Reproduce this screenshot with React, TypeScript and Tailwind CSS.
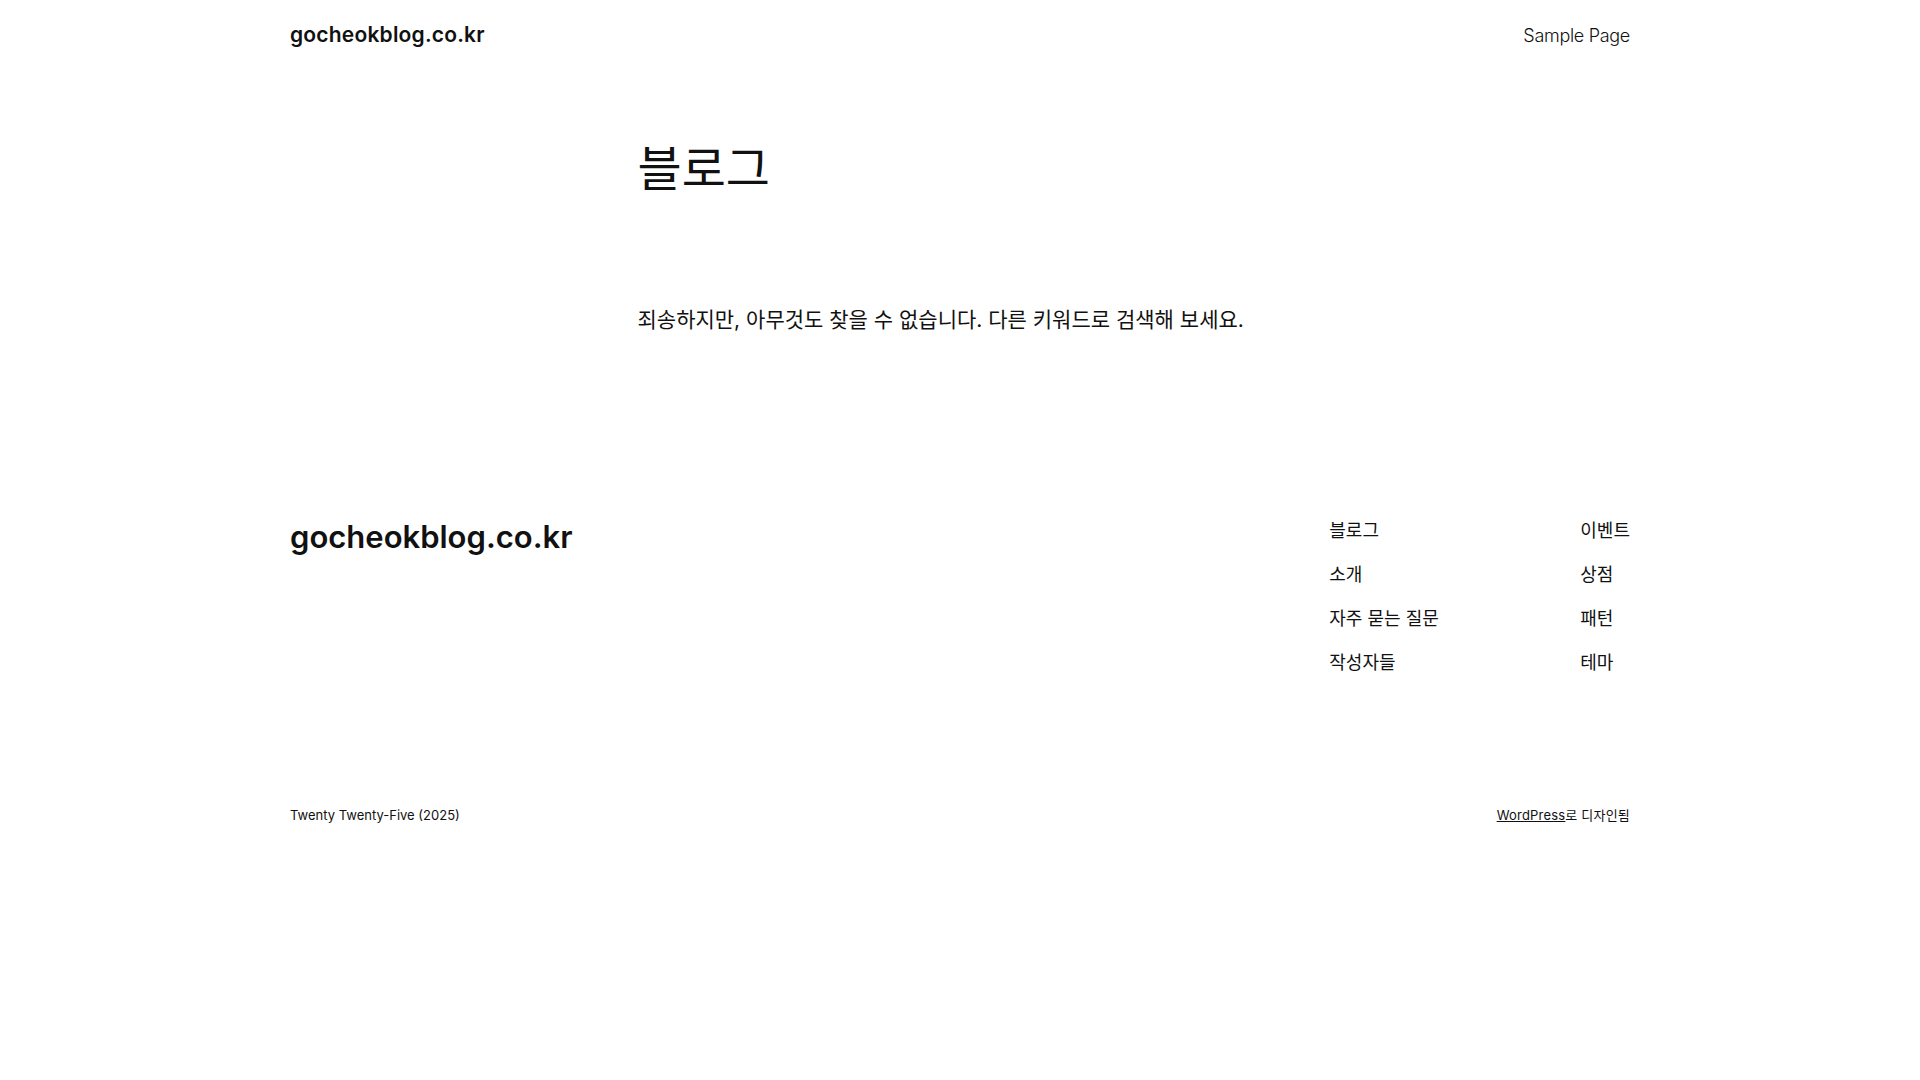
import React from "react";

const FONT = { fontFamily: '"Inter", "Noto Sans CJK KR", sans-serif' };

const navLeft = ["블로그", "소개", "자주 묻는 질문", "작성자들"];
const navRight = ["이벤트", "상점", "패턴", "테마"];

export default function App() {
    return (
        <div className="min-h-screen w-full bg-white text-[#111111]" style={FONT}>
            {/* header */}
            <header className="mx-auto flex h-[68px] w-[1340px] items-center justify-between pt-[2px]">
                <a className="text-[21px] font-semibold tracking-[0.2px]">gocheokblog.co.kr</a>
                <a className="text-[18px] font-light tracking-[-0.3px]">Sample Page</a>
            </header>

            {/* main */}
            <main className="mx-auto w-[645px] pt-[72px]">
                <h1 className="text-[48px] leading-[1.2] font-normal">블로그</h1>
                <p className="mt-[105px] text-[21px] leading-[1.6]">
                    죄송하지만, 아무것도 찾을 수 없습니다. 다른 키워드로 검색해 보세요.
                </p>
            </main>

            {/* footer */}
            <footer className="mx-auto mt-[178px] w-[1340px]">
                <div className="flex justify-between">
                    <div className="pt-[4px] text-[31px] font-semibold leading-[1.2]">
                        gocheokblog.co.kr
                    </div>
                    <div className="flex gap-[103px] pt-[2px]">
                        <ul className="flex w-[148px] flex-col gap-[15px] text-[18px] leading-[29px]">
                            {navLeft.map((item) => (
                                <li key={item}>{item}</li>
                            ))}
                        </ul>
                        <ul className="flex flex-col gap-[15px] text-[18px] leading-[29px]">
                            {navRight.map((item) => (
                                <li key={item}>{item}</li>
                            ))}
                        </ul>
                    </div>
                </div>
                <div className="mt-[129px] flex justify-between text-[13px]">
                    <p>Twenty Twenty-Five (2025)</p>
                    <p className="tracking-[0.2px]">
                        <a className="underline">WordPress</a>로 디자인됨
                    </p>
                </div>
            </footer>
        </div>
    );
}
